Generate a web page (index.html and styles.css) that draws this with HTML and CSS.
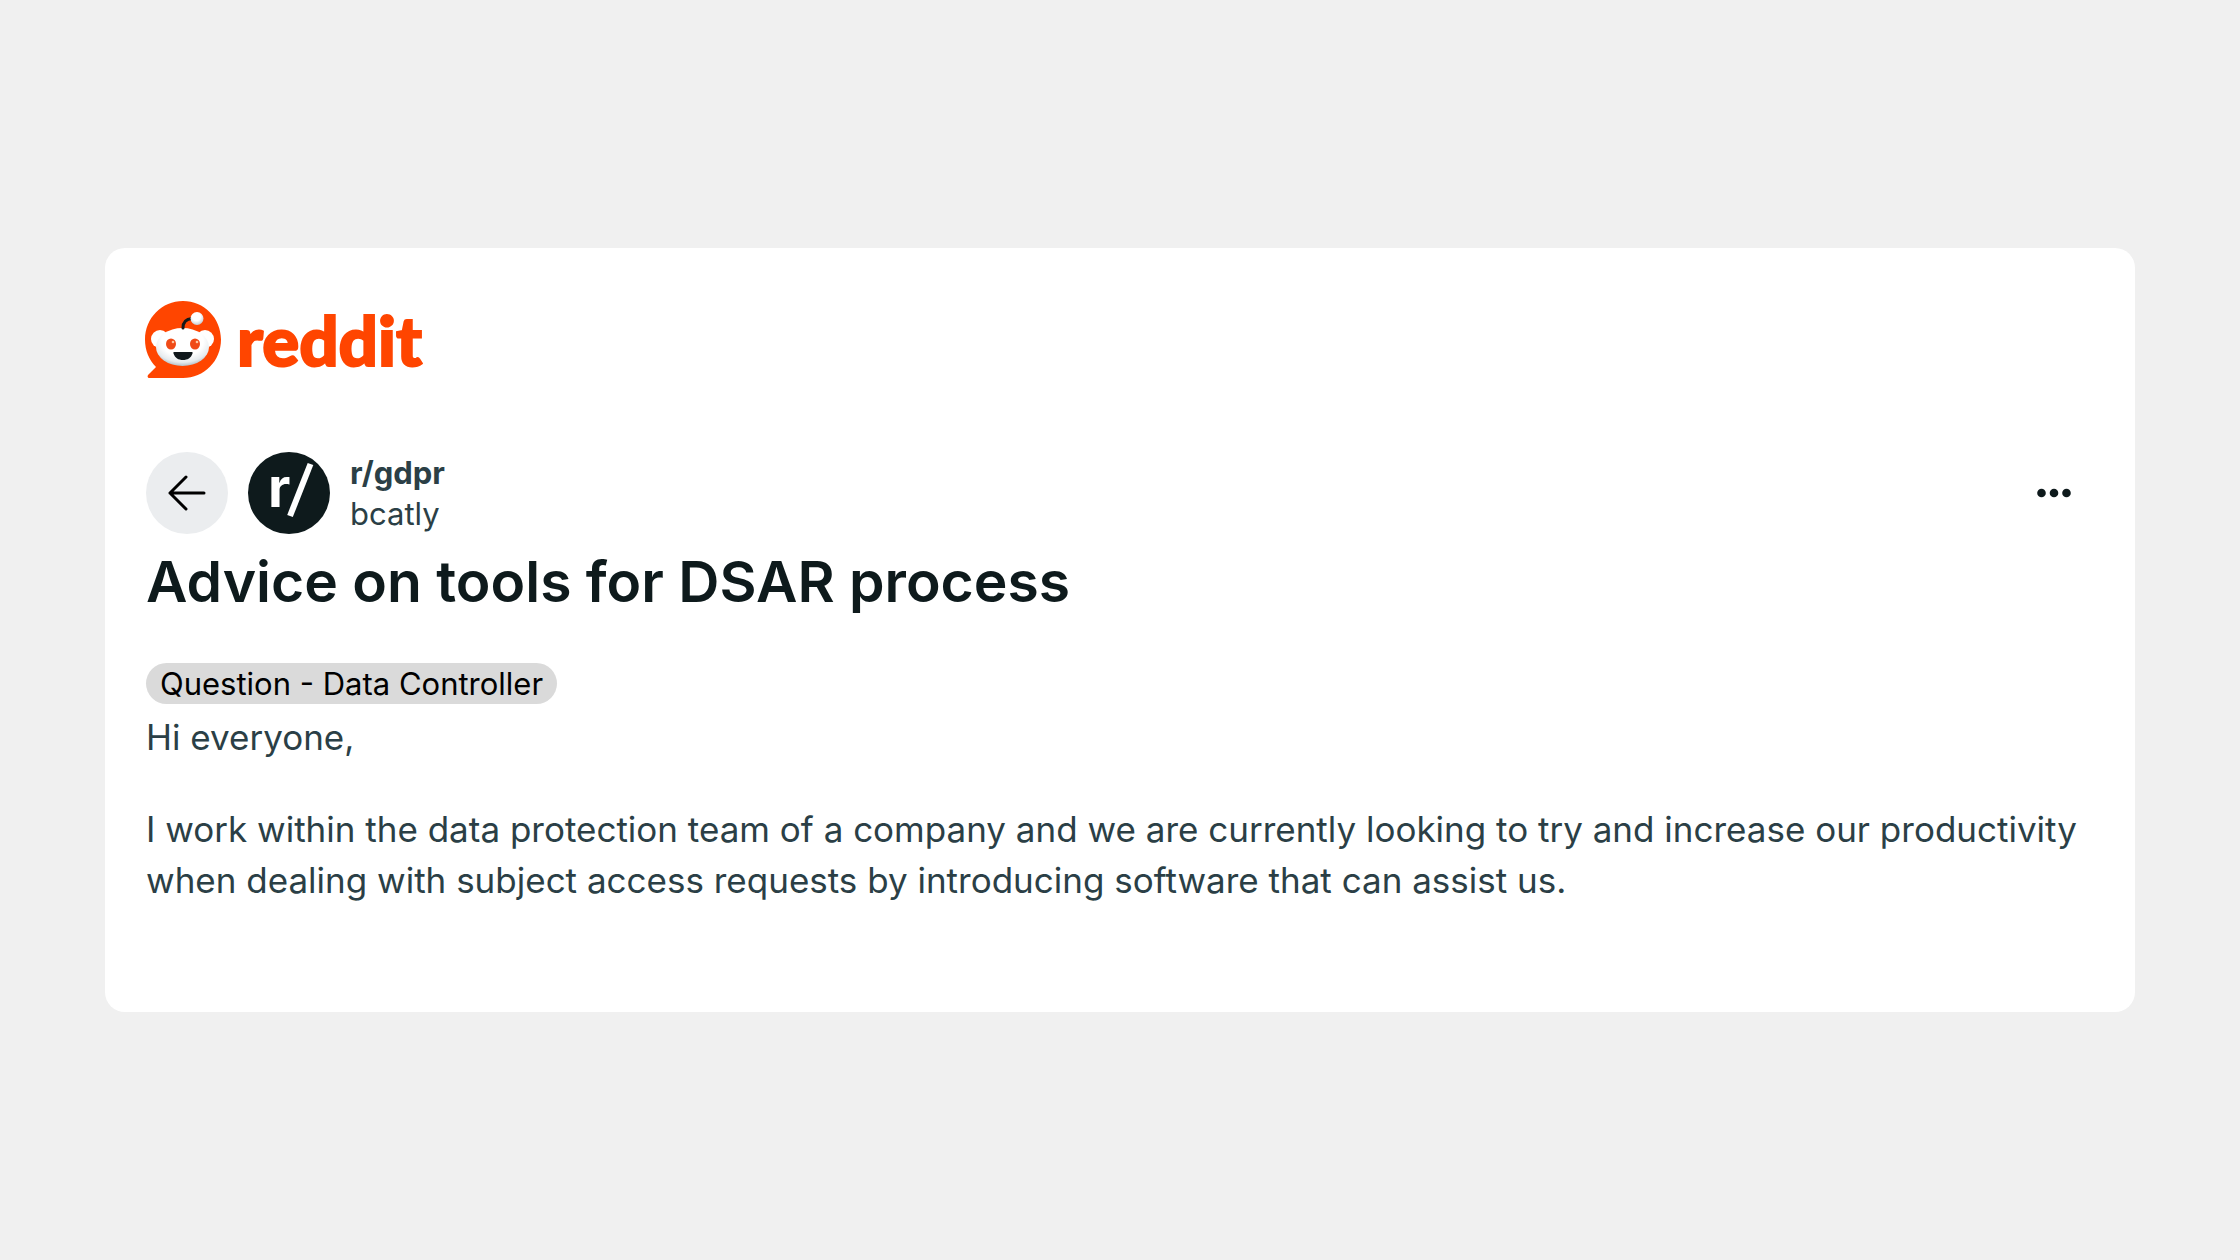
FILE: index.html
```html
<!DOCTYPE html>
<html lang="en">
<head>
  <meta charset="UTF-8">
  <meta name="viewport" content="width=device-width, initial-scale=1.0">
  <title>Advice on tools for DSAR process : r/gdpr</title>
  <link rel="stylesheet" href="styles.css">
</head>
<body>
  <main class="card">
    <a class="logo" href="#">
      <svg class="logo-icon" viewBox="0 0 78 78" aria-hidden="true">
        <defs>
          <radialGradient id="face" cx="50%" cy="35%" r="65%">
            <stop offset="0.6" stop-color="#ffffff"/>
            <stop offset="0.85" stop-color="#e6ebee"/>
            <stop offset="1" stop-color="#b4c0c8"/>
          </radialGradient>
          <radialGradient id="ball" cx="45%" cy="35%" r="65%">
            <stop offset="0.5" stop-color="#ffffff"/>
            <stop offset="1" stop-color="#c3ccd1"/>
          </radialGradient>
        </defs>
        <path d="M39 0C60 0 77 17 77 38.500S60 77 39 77H5.500C3.500 77 3 75 4.500 73.500L12 66C5 59 1 49.500 1 38.500C1 17 18 0 39 0Z" fill="#ff4500"/>
        <circle cx="16" cy="38" r="9" fill="#fff"/>
        <circle cx="61" cy="38" r="9" fill="#fff"/>
        <ellipse cx="38.500" cy="46" rx="26.500" ry="19" fill="url(#face)"/>
        <path d="M39 27C39 21 42 18 48 17.500" fill="none" stroke="#14191b" stroke-width="3" stroke-linecap="round"/>
        <circle cx="53" cy="17.500" r="6.500" fill="url(#ball)"/>
        <ellipse cx="27" cy="43" rx="5" ry="5.500" fill="#f04a16"/>
        <ellipse cx="51" cy="43" rx="5" ry="5.500" fill="#f04a16"/>
        <circle cx="29" cy="41" r="1.300" fill="#ffc49c"/>
        <circle cx="53" cy="41" r="1.300" fill="#ffc49c"/>
        <path d="M30.500 51H47.500C48.500 51 49 51.500 48.500 52.500C47 57 43.500 59 39 59S31 57 29.500 52.500C29 51.500 29.500 51 30.500 51Z" fill="#10181b"/>
      </svg>
      <span class="logo-text">reddit</span>
    </a>

    <header class="post-header">
      <button class="back" type="button" aria-label="Back">
        <svg viewBox="0 0 40 40" aria-hidden="true">
          <path d="M37 20H3M19 4L3 20L19 36" fill="none" stroke="#000" stroke-width="3" stroke-linecap="round" stroke-linejoin="round"/>
        </svg>
      </button>
      <a class="avatar" href="#" aria-label="r/gdpr">
        <svg viewBox="0 0 82 82" aria-hidden="true">
          <text x="20" y="55">r</text>
          <path d="M62.500 12.500L42 64" fill="none" stroke="#0e1a1c" stroke-width="8"/>
          <path d="M62.500 12L42 64" fill="none" stroke="#fff" stroke-width="6"/>
        </svg>
      </a>
      <div class="byline">
        <a class="subreddit" href="#">r/gdpr</a>
        <a class="author" href="#">bcatly</a>
      </div>
      <button class="more" type="button" aria-label="More options">
        <svg viewBox="0 0 36 10" aria-hidden="true">
          <circle cx="5.500" cy="5" r="4.300"/>
          <circle cx="18" cy="5" r="4.300"/>
          <circle cx="30.500" cy="5" r="4.300"/>
        </svg>
      </button>
    </header>

    <h1>Advice on tools for DSAR process</h1>
    <a class="flair" href="#">Question - Data Controller</a>

    <div class="post-body">
      <p>Hi everyone,</p>
      <p>I work within the data protection team of a company and we are currently looking to try and increase our productivity when dealing with subject access requests by introducing software that can assist us.</p>
    </div>
  </main>
</body>
</html>
```

FILE: styles.css
```css
* {
  box-sizing: border-box;
}
body {
  margin: 0;
  min-height: 100vh;
  display: flex;
  align-items: center;
  padding: 40px 105px;
  background: #f0f0f0;
  color: #2b3f46;
  font-family: Inter, "Liberation Sans", sans-serif;
}
a {
  color: inherit;
  text-decoration: none;
}
button {
  border: none;
  padding: 0;
  background: none;
  cursor: pointer;
}
.card {
  flex: 1;
  padding: 53px 40px 106px 41px;
  background: #fff;
  border-radius: 20px;
}
.logo {
  display: flex;
  align-items: center;
  gap: 15px;
  width: max-content;
  margin-left: -2px;
}
.logo-icon {
  display: block;
  width: 78px;
  height: 78px;
}
.logo-text {
  color: #ff4500;
  font-family: Lato, Inter, sans-serif;
  font-size: 69px;
  font-weight: 900;
  line-height: 76px;
  -webkit-text-stroke: 2px #ff4500;
}
.post-header {
  display: flex;
  align-items: center;
  gap: 20px;
  margin-top: 73px;
}
.back,
.avatar {
  display: flex;
  align-items: center;
  justify-content: center;
  width: 82px;
  height: 82px;
  border-radius: 50%;
}
.back {
  background: #ebedef;
}
.back svg {
  width: 40px;
  height: 40px;
}
.avatar {
  background: #0e1a1c;
}
.avatar svg {
  width: 82px;
  height: 82px;
}
.avatar text {
  fill: #fff;
  font-size: 55px;
  font-weight: 700;
}
.byline {
  display: flex;
  flex-direction: column;
  font-size: 31px;
  line-height: 41px;
}
.subreddit {
  font-weight: 700;
}
.more {
  display: flex;
  align-items: center;
  justify-content: center;
  width: 82px;
  height: 82px;
  margin-left: auto;
}
.more svg {
  width: 36px;
  height: 10px;
  fill: #0e1a1c;
}
h1 {
  margin: 10px 0 44px;
  color: #0e1a1c;
  font-size: 57px;
  font-weight: 600;
  line-height: 75px;
}
.flair {
  display: block;
  width: max-content;
  padding: 0 14px;
  border-radius: 21px;
  background: #dadada;
  color: #000;
  font-size: 31px;
  line-height: 41px;
}
.post-body {
  margin-top: 8px;
  font-size: 35px;
  line-height: 51px;
}
.post-body p {
  margin: 0 0 41px;
}
.post-body p:last-child {
  margin-bottom: 0;
}
```
